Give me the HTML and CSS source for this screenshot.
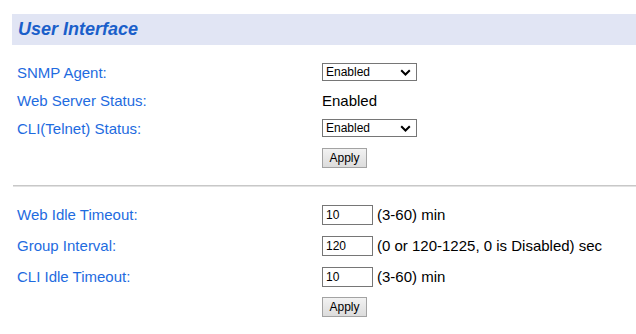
FILE: index.html
```html
<!DOCTYPE html>
<html lang="en">
<head>
    <meta charset="UTF-8">
    <title>User Interface</title>
    <link rel="stylesheet" href="styles.css">
</head>
<body>
    <div class="page">
        <h1 class="title">User Interface</h1>

        <div class="section first">
            <div class="row">
                <label class="label" for="snmp_agent">SNMP Agent:</label>
                <select id="snmp_agent" class="select">
                    <option>Enabled</option>
                    <option>Disabled</option>
                </select>
            </div>
            <div class="row">
                <span class="label">Web Server Status:</span>
                <span class="value">Enabled</span>
            </div>
            <div class="row">
                <label class="label" for="cli_status">CLI(Telnet) Status:</label>
                <select id="cli_status" class="select">
                    <option>Enabled</option>
                    <option>Disabled</option>
                </select>
            </div>
            <div class="button-row">
                <button class="apply">Apply</button>
            </div>
        </div>

        <hr class="divider">

        <div class="section second">
            <div class="row tall">
                <label class="label" for="web_idle">Web Idle Timeout:</label>
                <input type="text" id="web_idle" class="field" value="10">
                <span class="hint">(3-60) min</span>
            </div>
            <div class="row tall">
                <label class="label" for="group_interval">Group Interval:</label>
                <input type="text" id="group_interval" class="field" value="120">
                <span class="hint">(0 or 120-1225, 0 is Disabled) sec</span>
            </div>
            <div class="row tall">
                <label class="label" for="cli_idle">CLI Idle Timeout:</label>
                <input type="text" id="cli_idle" class="field" value="10">
                <span class="hint">(3-60) min</span>
            </div>
            <div class="button-row near">
                <button class="apply">Apply</button>
            </div>
        </div>
    </div>
</body>
</html>
```

FILE: styles.css
```css
body {
    margin: 0;
    font-family: "Liberation Sans", Arial, sans-serif;
    background-color: #fff;
}

.page {
    padding-top: 14px;
}

.title {
    margin: 0 0 0 12px;
    height: 31px;
    line-height: 31px;
    padding-left: 6px;
    background-color: #e1e5f4;
    color: #1a5fca;
    font-size: 18px;
    font-weight: bold;
    font-style: italic;
}

.section {
    padding-left: 17px;
}

.section.first {
    padding-top: 13px;
}

.section.second {
    padding-top: 12px;
}

.row {
    display: flex;
    align-items: center;
    height: 28px;
}

.row.tall {
    height: 31px;
}

.label {
    width: 305px;
    flex-shrink: 0;
    color: #1e6be0;
    font-size: 15px;
}

.value {
    color: #000;
    font-size: 15px;
}

.select {
    appearance: none;
    box-sizing: border-box;
    width: 95px;
    height: 18px;
    margin: 0;
    padding: 0 0 0 3px;
    border: 1px solid #767676;
    border-radius: 0;
    background: #fff url("data:image/svg+xml;utf8,<svg xmlns='http://www.w3.org/2000/svg' width='11' height='7' viewBox='0 0 11 7'><path d='M1.2 1.2l4.3 4.3 4.3-4.3' fill='none' stroke='%23000' stroke-width='2'/></svg>") no-repeat right 5px center;
    font-family: "Liberation Sans", Arial, sans-serif;
    font-size: 12px;
    color: #000;
}

.field {
    box-sizing: border-box;
    width: 51px;
    height: 20px;
    margin: 0;
    padding: 0 3px;
    border: 1px solid #767676;
    font-family: "Liberation Sans", Arial, sans-serif;
    font-size: 12px;
    color: #000;
}

.hint {
    margin-left: 4px;
    font-size: 15px;
    color: #000;
}

.button-row {
    padding-left: 305px;
    margin-top: 6px;
}

.button-row.near {
    margin-top: 5px;
}

.apply {
    box-sizing: border-box;
    width: 45px;
    height: 20px;
    padding: 0;
    border: 1px solid #a3a3a3;
    border-radius: 0;
    background: linear-gradient(#f2f2f2, #dcdcdc);
    font-family: "Liberation Sans", Arial, sans-serif;
    font-size: 12px;
    color: #000;
}

.divider {
    margin: 17px 0 0 13px;
    height: 0;
    border: none;
    border-top: 1px solid #c8c8c8;
    border-bottom: 1px solid #e2e2e2;
}
```
